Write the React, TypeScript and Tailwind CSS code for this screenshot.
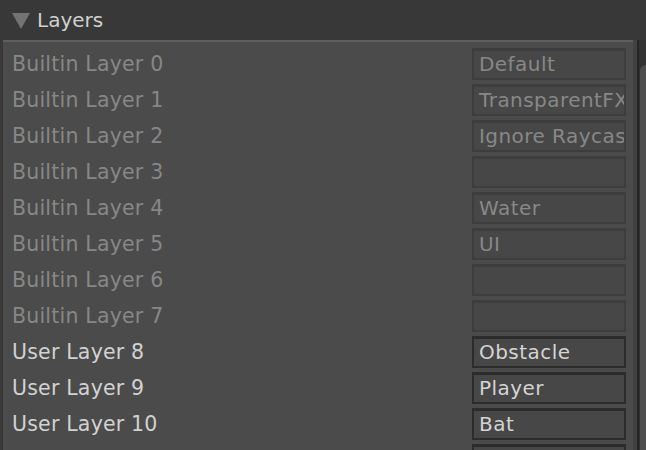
const layers = [
  { label: "Builtin Layer 0", value: "Default", builtin: true },
  { label: "Builtin Layer 1", value: "TransparentFX", builtin: true },
  { label: "Builtin Layer 2", value: "Ignore Raycast", builtin: true },
  { label: "Builtin Layer 3", value: "", builtin: true },
  { label: "Builtin Layer 4", value: "Water", builtin: true },
  { label: "Builtin Layer 5", value: "UI", builtin: true },
  { label: "Builtin Layer 6", value: "", builtin: true },
  { label: "Builtin Layer 7", value: "", builtin: true },
  { label: "User Layer 8", value: "Obstacle", builtin: false },
  { label: "User Layer 9", value: "Player", builtin: false },
  { label: "User Layer 10", value: "Bat", builtin: false },
  { label: "", value: "", builtin: false },
]

export default function App() {
  return (
    <div
      className="w-[646px] h-[450px] overflow-hidden bg-[#383838] flex flex-col"
      style={{ fontFamily: '"DejaVu Sans", sans-serif' }}
    >
      {/* header */}
      <div className="h-[40px] shrink-0 flex items-center pl-[12px]">
        <svg width="18" height="16" viewBox="0 0 18 16" className="mr-[7px] mt-[1px]">
          <polygon points="0,0 18,0 9,16" fill="#737373" />
        </svg>
        <span className="text-[20px] text-[#d0d0d0] leading-none">Layers</span>
      </div>

      <div className="flex flex-1 min-h-0">
        {/* panel */}
        <div className="ml-[3px] w-[630px] bg-[#4b4b4b] border-t-2 border-[#5e5e5e] pt-[4px] pr-[7px] overflow-hidden">
          {layers.map((l, i) => (
            <div key={i} className="h-[36px] flex items-center justify-between">
              <span
                className={`pl-[9px] text-[20.5px] tracking-[0.2px] leading-none whitespace-nowrap ${
                  l.builtin ? "text-[#878787]" : "text-[#d2d2d2]"
                }`}
              >
                {l.label}
              </span>
              <div
                className={`w-[154px] h-[32px] bg-[#474747] border-2 border-t-[3px] flex items-center pl-[5px] pb-[2px] overflow-hidden ${
                  l.builtin ? "border-[#3d3d3d]" : "border-[#2c2c2c]"
                }`}
              >
                <span
                  className={`text-[20px] tracking-[0.45px] leading-none whitespace-nowrap ${
                    l.builtin ? "text-[#888888]" : "text-[#d4d4d4]"
                  }`}
                >
                  {l.value}
                </span>
              </div>
            </div>
          ))}
        </div>

        {/* scrollbar */}
        <div className="w-[4px] bg-[#424242]" />
        <div className="w-[2px] bg-[#262626]" />
        <div className="flex-1 bg-[#333333] pt-[25px] pl-[1px]">
          <div className="h-full bg-[#4e4e4e] rounded-tl-[6px]" />
        </div>
      </div>
    </div>
  )
}
